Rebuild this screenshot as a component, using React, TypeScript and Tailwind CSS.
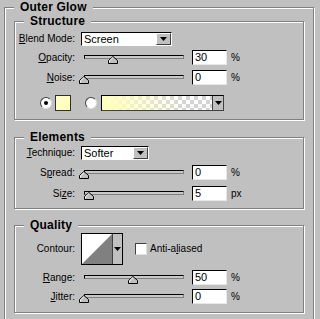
import React from 'react';

const Arrow = () => (
  <svg width="7" height="4" viewBox="0 0 7 4">
    <path d="M0 0h7L3.5 4z" fill="#000" />
  </svg>
);

const Thumb = () => (
  <svg width="10" height="8" viewBox="0 0 10 8">
    <path d="M5 0.5L9.5 4.5V7.5H0.5V4.5Z" fill="#c0c0c0" stroke="#000" />
    <path d="M5 1.5L1.5 4.8V6.5" fill="none" stroke="#fff" />
  </svg>
);

function Group({ title, className, children }: { title: string; className?: string; children?: React.ReactNode }) {
  return (
    <div className={`relative border border-[#808080] shadow-[inset_1px_1px_0_#fff,1px_1px_0_#fff] ${className ?? ''}`}>
      <div className="absolute -top-[8px] left-[9px] px-[6px] bg-[#c0c0c0] font-bold text-[12px] leading-[14px] tracking-[0.2px]">
        {title}
      </div>
      {children}
    </div>
  );
}

function Label({ children }: { children: React.ReactNode }) {
  return <div className="w-[60px] text-right whitespace-nowrap">{children}</div>;
}

function Select({ value, className }: { value: string; className: string }) {
  return (
    <div className={`ml-[6px] flex h-[14px] bg-white border border-t-black border-l-black border-b-white border-r-white ${className}`}>
      <div className="flex-1 pl-[2px] text-[11px] leading-[12px]">{value}</div>
      <div className="w-[15px] h-[12px] flex items-center justify-center bg-[#c0c0c0] border border-t-white border-l-white border-b-[#404040] border-r-[#404040]">
        <Arrow />
      </div>
    </div>
  );
}

function Slider({ value }: { value: number }) {
  return (
    <div className="relative ml-[6px] w-[111px] h-[15px]">
      <div className="mt-[5px] ml-[3px] w-[100px] h-[4px] bg-[#c8c8c8] border border-black border-b-[#808080] border-r-[#808080]" />
      <div className="absolute top-[6px] h-[8px] leading-none" style={{ left: 3 + value * 0.98 - 5 }}>
        <Thumb />
      </div>
    </div>
  );
}

function Field({ value, unit }: { value: string; unit: string }) {
  return (
    <>
      <div className="w-[35px] h-[15px] bg-white border border-t-black border-l-black border-b-[#e8e8e8] border-r-[#e8e8e8] pl-[2px] text-[11px] leading-[13px]">
        {value}
      </div>
      <div className="ml-[4px] text-[10px]">{unit}</div>
    </>
  );
}

function SliderRow({ label, value, unit, className }: { label: React.ReactNode; value: number; unit: string; className: string }) {
  return (
    <div className={`flex items-center h-[15px] ${className}`}>
      <Label>{label}</Label>
      <Slider value={value} />
      <Field value={String(value)} unit={unit} />
    </div>
  );
}

const U = ({ children }: { children: React.ReactNode }) => <span className="underline underline-offset-[1px]">{children}</span>;

function Radio({ checked }: { checked?: boolean }) {
  return (
    <div className="w-[12px] h-[12px] rounded-full bg-white border border-t-[#404040] border-l-[#404040] border-b-[#e0e0e0] border-r-[#e0e0e0] flex items-center justify-center">
      {checked && <div className="w-[4px] h-[4px] rounded-full bg-black" />}
    </div>
  );
}

export default function App() {
  return (
    <div className="w-[320px] h-[319px] overflow-hidden bg-[#c0c0c0] pl-[4px] pt-[7px] text-black text-[10px] leading-[12px] [font-family:'Liberation_Sans',Arial,sans-serif]">
      <Group title="Outer Glow" className="w-[310px] h-[330px] pt-[13px] px-[9px]">
        <Group title="Structure" className="h-[99px] pt-[10px]">
          <div className="flex items-center h-[14px]">
            <Label><U>B</U>lend Mode:</Label>
            <Select value="Screen" className="w-[91px]" />
          </div>
          <SliderRow label={<><U>O</U>pacity:</>} value={30} unit="%" className="mt-[4px]" />
          <SliderRow label={<><U>N</U>oise:</>} value={0} unit="%" className="mt-[5px]" />
          <div className="flex items-center h-[17px] mt-[9px] pl-[25px]">
            <Radio checked />
            <div className="ml-[3px] w-[16px] h-[16px] bg-[#ffffc0] border border-[#303030]" />
            <div className="ml-[14px]">
              <Radio />
            </div>
            <div className="ml-[4px] flex h-[16px] border border-t-black border-l-black border-b-[#404040] border-r-[#404040]">
              <div className="w-[110px] h-full [background-image:linear-gradient(to_right,#ffffc0_5%,rgba(255,255,192,0)_75%),repeating-conic-gradient(#d4d4d4_0%_25%,#ffffff_0%_50%)] [background-size:100%_100%,8px_8px]" />
              <div className="w-[11px] h-full flex items-center justify-center bg-[#c0c0c0] border-l border-[#404040]">
                <Arrow />
              </div>
            </div>
          </div>
        </Group>

        <Group title="Elements" className="mt-[17px] h-[72px] pt-[8px]">
          <div className="flex items-center h-[14px]">
            <Label><U>T</U>echnique:</Label>
            <Select value="Softer" className="w-[68px]" />
          </div>
          <SliderRow label={<>S<U>p</U>read:</>} value={0} unit="%" className="mt-[5px]" />
          <SliderRow label={<>Si<U>z</U>e:</>} value={5} unit="px" className="mt-[6px]" />
        </Group>

        <Group title="Quality" className="mt-[16px] h-[88px] pt-[7px]">
          <div className="flex items-center h-[32px]">
            <Label>Contour:</Label>
            <div className="ml-[6px] flex w-[42px] h-[32px] border border-black bg-white">
              <svg width="30" height="30" viewBox="0 0 30 30">
                <rect width="30" height="30" fill="#fff" />
                <path d="M0 30L30 0V30Z" fill="#808080" />
              </svg>
              <div className="flex-1 flex items-center justify-center bg-[#c0c0c0] border-l border-[#404040]">
                <Arrow />
              </div>
            </div>
            <div className="ml-[12px] w-[12px] h-[12px] bg-white border border-t-[#404040] border-l-[#404040] border-b-[#e0e0e0] border-r-[#e0e0e0]" />
            <div className="ml-[3px]">Anti-a<U>l</U>iased</div>
          </div>
          <SliderRow label={<><U>R</U>ange:</>} value={50} unit="%" className="mt-[5px]" />
          <SliderRow label={<><U>J</U>itter:</>} value={0} unit="%" className="mt-[4px]" />
        </Group>
      </Group>
    </div>
  );
}
